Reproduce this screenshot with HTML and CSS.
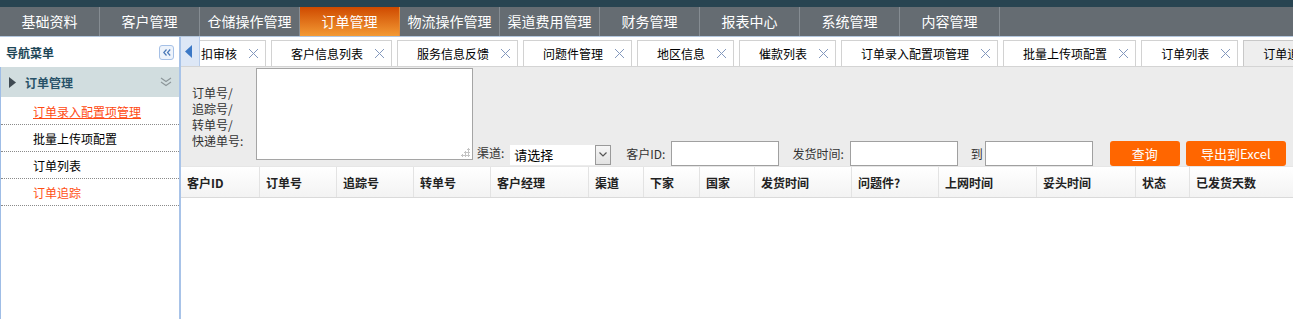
FILE: index.html
```html
<!DOCTYPE html>
<html>
<head>
    <meta charset="utf-8">
    <title>订单追踪</title>
    <link rel="stylesheet" href="styles.css">
</head>
<body>
    <div class="topbar"></div>
    <nav class="menubar">
        <a class="menu-item">基础资料</a>
        <a class="menu-item">客户管理</a>
        <a class="menu-item">仓储操作管理</a>
        <a class="menu-item active">订单管理</a>
        <a class="menu-item">物流操作管理</a>
        <a class="menu-item">渠道费用管理</a>
        <a class="menu-item">财务管理</a>
        <a class="menu-item">报表中心</a>
        <a class="menu-item">系统管理</a>
        <a class="menu-item">内容管理</a>
    </nav>

    <div class="layout">
        <aside class="side">
            <div class="side-head">
                <span>导航菜单</span>
                <span class="collapse">
                    <svg width="8" height="7" viewBox="0 0 8 7"><path d="M3.5 0.5 L0.8 3.5 L3.5 6.5 M7.2 0.5 L4.5 3.5 L7.2 6.5" fill="none" stroke="#4a79b8" stroke-width="1.2"/></svg>
                </span>
            </div>
            <div class="side-body">
                <div class="group-title">
                    <svg class="arrow-right" width="8" height="11" viewBox="0 0 8 11"><path d="M0 0 L7 5.5 L0 11 Z" fill="#3f4a52"/></svg>
                    <span>订单管理</span>
                    <svg class="chevrons" width="12" height="10" viewBox="0 0 12 10"><path d="M1 1 L6 4.5 L11 1 M1 5 L6 8.5 L11 5" fill="none" stroke="#8c9699" stroke-width="1.1"/></svg>
                </div>
                <ul class="side-list">
                    <li class="current">订单录入配置项管理</li>
                    <li>批量上传项配置</li>
                    <li>订单列表</li>
                    <li class="hot">订单追踪</li>
                </ul>
            </div>
        </aside>

        <main class="main">
            <div class="tabs">
                <span class="tab-prev">
                    <svg width="8" height="13" viewBox="0 0 8 13"><path d="M7 0 L0 6.5 L7 13 Z" fill="#3b78c6"/></svg>
                </span>
                <div class="tab">扣审核<i class="tab-close"></i></div>
                <div class="tab">客户信息列表<i class="tab-close"></i></div>
                <div class="tab">服务信息反馈<i class="tab-close"></i></div>
                <div class="tab">问题件管理<i class="tab-close"></i></div>
                <div class="tab">地区信息<i class="tab-close"></i></div>
                <div class="tab">催款列表<i class="tab-close"></i></div>
                <div class="tab">订单录入配置项管理<i class="tab-close"></i></div>
                <div class="tab">批量上传项配置<i class="tab-close"></i></div>
                <div class="tab">订单列表<i class="tab-close"></i></div>
                <div class="tab active">订单追踪<i class="tab-close"></i></div>
            </div>

            <form class="search">
                <label class="nums-label">订单号/<br>追踪号/<br>转单号/<br>快递单号:</label>
                <textarea class="nums"></textarea>
                <div class="field channel">
                    <label>渠道:</label>
                    <div class="select">
                        <span>请选择</span>
                        <span class="select-btn">
                            <svg width="8" height="5" viewBox="0 0 8 5"><path d="M0.5 0.5 L4 4 L7.5 0.5" fill="none" stroke="#555" stroke-width="1.2"/></svg>
                        </span>
                    </div>
                </div>
                <div class="field gap15">
                    <label>客户ID:</label>
                    <input class="text">
                </div>
                <div class="field gap13">
                    <label>发货时间:</label>
                    <input class="text">
                </div>
                <div class="field gap13">
                    <label class="tight">到</label>
                    <input class="text">
                </div>
                <button type="button" class="btn btn-query">查询</button>
                <button type="button" class="btn btn-export">导出到Excel</button>
            </form>

            <div class="grid-head">
                <div class="col c79">客户ID</div>
                <div class="col c77">订单号</div>
                <div class="col c77">追踪号</div>
                <div class="col c77">转单号</div>
                <div class="col c98">客户经理</div>
                <div class="col c55">渠道</div>
                <div class="col c56">下家</div>
                <div class="col c55">国家</div>
                <div class="col c97">发货时间</div>
                <div class="col c87">问题件?</div>
                <div class="col c98">上网时间</div>
                <div class="col c99">妥头时间</div>
                <div class="col c54">状态</div>
                <div class="col last">已发货天数</div>
            </div>
        </main>
    </div>
</body>
</html>
```

FILE: styles.css
```css
* {
    box-sizing: border-box;
}
body {
    margin: 0;
    width: 1293px;
    height: 319px;
    overflow: hidden;
    background: #fff;
    font-family: "Noto Sans CJK SC", "Noto Sans", sans-serif;
    font-size: 12px;
    color: #000;
}
.topbar {
    height: 7px;
    background: #284451;
}
.menubar {
    display: flex;
    height: 30px;
    background: #656c72;
    border-bottom: 1px solid #b3c7de;
}
.menu-item {
    width: 100px;
    height: 29px;
    line-height: 29px;
    text-align: center;
    color: #fff;
    font-size: 14px;
    border-right: 1px solid #858c92;
}
.menu-item.active {
    background: linear-gradient(#cf4a00, #f39a34);
    border-right-color: #e08a3a;
}

.layout {
    display: flex;
    height: 282px;
}
.side {
    width: 181px;
    flex: none;
    border-right: 2px solid #a8c3e8;
    display: flex;
    flex-direction: column;
}
.side-head {
    height: 30px;
    display: flex;
    align-items: center;
    justify-content: space-between;
    padding: 0 5px 0 6px;
    font-weight: bold;
    color: #1d4657;
}
.collapse {
    width: 15px;
    height: 15px;
    border: 1px solid #a5c0e6;
    border-radius: 3px;
    background: #edf3fb;
    display: flex;
    align-items: center;
    justify-content: center;
}
.side-body {
    flex: 1;
    border-left: 1px solid #9fbde6;
}
.group-title {
    height: 30px;
    background: #d1dddf;
    display: flex;
    align-items: center;
    padding: 0 7px 0 8px;
    font-weight: bold;
    color: #285268;
}
.group-title .arrow-right {
    margin-right: 8px;
}
.group-title .chevrons {
    margin-left: auto;
}
.side-list {
    list-style: none;
    margin: 0;
    padding: 0;
}
.side-list li {
    height: 27px;
    line-height: 28px;
    padding-left: 32px;
    border-bottom: 1px dotted #8a8a8a;
}
.side-list li:first-child {
    height: 28px;
    line-height: 29px;
}
.side-list li.current {
    color: #ff4a12;
    text-decoration: underline;
}
.side-list li.hot {
    color: #ff5014;
}

.main {
    flex: 1;
    min-width: 0;
    display: flex;
    flex-direction: column;
}
.tabs {
    position: relative;
    height: 30px;
    display: flex;
    align-items: flex-end;
    gap: 5px;
    overflow: hidden;
    border-bottom: 1px solid #d4d4d4;
}
.tab-prev {
    position: absolute;
    left: 0;
    top: 0;
    width: 19px;
    height: 29px;
    background: #dde7f6;
    border-right: 1px solid #b8cdec;
    display: flex;
    align-items: center;
    justify-content: center;
    padding-right: 2px;
    z-index: 1;
}
.tab {
    flex: none;
    height: 26px;
    display: flex;
    align-items: center;
    padding: 0 7px 0 19px;
    border: 1px solid #d2d2d2;
    border-bottom: none;
    background: #fff;
    white-space: nowrap;
}
.tab.active {
    background: #eeeeee;
    border-color: #c8c8c8;
}
.tab-close {
    width: 9px;
    height: 9px;
    margin-left: 12px;
    background:
        linear-gradient(45deg, transparent 46%, #8398bd 46%, #8398bd 54%, transparent 54%),
        linear-gradient(-45deg, transparent 46%, #8398bd 46%, #8398bd 54%, transparent 54%);
}

.search {
    height: 99px;
    margin: 0;
    background: #ececec;
    display: flex;
    align-items: flex-end;
    padding-left: 11px;
}
.nums-label {
    width: 64px;
    line-height: 16px;
    color: #333;
    margin-bottom: 17px;
}
.nums {
    align-self: flex-start;
    width: 217px;
    height: 92px;
    margin: 1px 0 0;
    border: 1px solid #a5a5a5;
    background:
        radial-gradient(circle, #c4c4c4 1px, transparent 1.2px) right 2px bottom 2px / 3px 3px no-repeat,
        radial-gradient(circle, #c4c4c4 1px, transparent 1.2px) right 5px bottom 2px / 3px 3px no-repeat,
        radial-gradient(circle, #c4c4c4 1px, transparent 1.2px) right 2px bottom 5px / 3px 3px no-repeat,
        radial-gradient(circle, #c4c4c4 1px, transparent 1.2px) right 8px bottom 2px / 3px 3px no-repeat,
        radial-gradient(circle, #c4c4c4 1px, transparent 1.2px) right 2px bottom 8px / 3px 3px no-repeat,
        radial-gradient(circle, #c4c4c4 1px, transparent 1.2px) right 5px bottom 5px / 3px 3px no-repeat,
        #fff;
    resize: none;
    font: inherit;
}
.field {
    display: flex;
    align-items: center;
    height: 25px;
    color: #333;
}
.field label {
    margin-right: 6px;
}
.field label.tight {
    margin-right: 2px;
}
.channel {
    margin-left: 4px;
    margin-bottom: 1px;
}
.gap15 {
    margin-left: 15px;
}
.gap13 {
    margin-left: 13px;
}
.select {
    width: 101px;
    height: 20px;
    background: #fff;
    display: flex;
    align-items: center;
    justify-content: space-between;
    padding-left: 4px;
    font-size: 13px;
    color: #000;
    margin-top: 4px;
}
.select-btn {
    width: 16px;
    height: 20px;
    border: 1px solid #9a9a9a;
    background: linear-gradient(#f6f6f6, #e2e2e2);
    display: flex;
    align-items: center;
    justify-content: center;
}
.text {
    width: 108px;
    height: 25px;
    border: 1px solid #a0a0a0;
    background: #fff;
    padding: 0 3px;
    font: inherit;
}
.btn {
    height: 25px;
    border: none;
    border-radius: 3px;
    background: #ff6600;
    color: #fff;
    font-family: inherit;
    font-size: 13px;
    padding: 0;
}
.btn-query {
    width: 70px;
    margin-left: 17px;
}
.btn-export {
    width: 100px;
    margin-left: 6px;
}

.grid-head {
    display: flex;
    height: 32px;
    border-top: 1px solid #e6e6e6;
    border-bottom: 1px solid #dadada;
    background: linear-gradient(#ffffff, #f3f3f3);
}
.col {
    flex: none;
    height: 100%;
    display: flex;
    align-items: center;
    padding-left: 6px;
    font-weight: bold;
    color: #222;
    border-right: 1px solid #e3e3e3;
    white-space: nowrap;
}
.col.last {
    flex: 1;
    border-right: none;
}
.c54 { width: 54px; }
.c55 { width: 55px; }
.c56 { width: 56px; }
.c77 { width: 77px; }
.c79 { width: 79px; }
.c87 { width: 87px; }
.c97 { width: 97px; }
.c98 { width: 98px; }
.c99 { width: 99px; }
```
